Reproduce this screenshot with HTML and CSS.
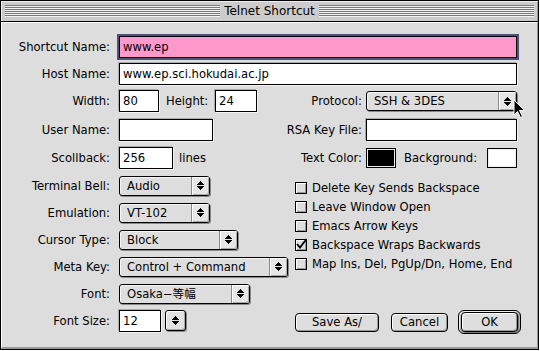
FILE: index.html
```html
<!DOCTYPE html>
<html>
<head>
<meta charset="utf-8">
<title>Telnet Shortcut</title>
<link rel="stylesheet" href="styles.css">
</head>
<body>
<div class="window">
  <div class="titlebar">
    <div class="stripes"></div>
    <div class="title">Telnet Shortcut</div>
    <div class="stripes"></div>
  </div>
  <div class="content">
    <div class="upper">
      <div class="lbl">Shortcut Name:</div>
      <div class="field focus wide">www.ep</div>

      <div class="lbl">Host Name:</div>
      <div class="field wide">www.ep.sci.hokudai.ac.jp</div>

      <div class="lbl">Width:</div>
      <div class="pair">
        <div class="field w40">80</div>
        <div class="inlbl">Height:</div>
        <div class="field w42">24</div>
      </div>
      <div class="rlbl">Protocol:</div>
      <div class="popup full">
        <span class="ptext">SSH &amp; 3DES</span>
        <span class="parrow"><svg width="7" height="9" viewBox="0 0 7 9"><path d="M3 0h1v1H3zM2 1h3v1H2zM1 2h5v1H1zM0 3h7v1H0zM0 5h7v1H0zM1 6h5v1H1zM2 7h3v1H2zM3 8h1v1H3z" fill="#000"/></svg></span>
      </div>

      <div class="lbl">User Name:</div>
      <div class="cell"><div class="field w94"></div></div>
      <div class="rlbl">RSA Key File:</div>
      <div class="field full"></div>

      <div class="lbl">Scollback:</div>
      <div class="pair">
        <div class="field w54">256</div>
        <div class="unit">lines</div>
      </div>
      <div class="rlbl">Text Color:</div>
      <div class="colors">
        <div class="swatch"><div class="fill black"></div></div>
        <div class="bglbl">Background:</div>
        <div class="swatch end"><div class="fill white"></div></div>
      </div>
    </div>

    <div class="lower">
      <div class="left">
        <div class="lbl">Terminal Bell:</div>
        <div class="popup w91">
          <span class="ptext">Audio</span>
          <span class="parrow"><svg width="7" height="9" viewBox="0 0 7 9"><path d="M3 0h1v1H3zM2 1h3v1H2zM1 2h5v1H1zM0 3h7v1H0zM0 5h7v1H0zM1 6h5v1H1zM2 7h3v1H2zM3 8h1v1H3z" fill="#000"/></svg></span>
        </div>

        <div class="lbl">Emulation:</div>
        <div class="popup w91">
          <span class="ptext">VT-102</span>
          <span class="parrow"><svg width="7" height="9" viewBox="0 0 7 9"><path d="M3 0h1v1H3zM2 1h3v1H2zM1 2h5v1H1zM0 3h7v1H0zM0 5h7v1H0zM1 6h5v1H1zM2 7h3v1H2zM3 8h1v1H3z" fill="#000"/></svg></span>
        </div>

        <div class="lbl">Cursor Type:</div>
        <div class="popup w119">
          <span class="ptext">Block</span>
          <span class="parrow"><svg width="7" height="9" viewBox="0 0 7 9"><path d="M3 0h1v1H3zM2 1h3v1H2zM1 2h5v1H1zM0 3h7v1H0zM0 5h7v1H0zM1 6h5v1H1zM2 7h3v1H2zM3 8h1v1H3z" fill="#000"/></svg></span>
        </div>

        <div class="lbl">Meta Key:</div>
        <div class="popup w169">
          <span class="ptext">Control + Command</span>
          <span class="parrow"><svg width="7" height="9" viewBox="0 0 7 9"><path d="M3 0h1v1H3zM2 1h3v1H2zM1 2h5v1H1zM0 3h7v1H0zM0 5h7v1H0zM1 6h5v1H1zM2 7h3v1H2zM3 8h1v1H3z" fill="#000"/></svg></span>
        </div>

        <div class="lbl">Font:</div>
        <div class="popup w131">
          <span class="ptext">Osaka−等幅</span>
          <span class="parrow"><svg width="7" height="9" viewBox="0 0 7 9"><path d="M3 0h1v1H3zM2 1h3v1H2zM1 2h5v1H1zM0 3h7v1H0zM0 5h7v1H0zM1 6h5v1H1zM2 7h3v1H2zM3 8h1v1H3z" fill="#000"/></svg></span>
        </div>

        <div class="lbl">Font Size:</div>
        <div class="pair">
          <div class="field w42">12</div>
          <div class="stepper"><svg width="7" height="9" viewBox="0 0 7 9"><path d="M3 0h1v1H3zM2 1h3v1H2zM1 2h5v1H1zM0 3h7v1H0zM0 5h7v1H0zM1 6h5v1H1zM2 7h3v1H2zM3 8h1v1H3z" fill="#000"/></svg></div>
        </div>
      </div>

      <div class="right">
        <div class="checks">
          <div class="check"><span class="cb"></span>Delete Key Sends Backspace</div>
          <div class="check"><span class="cb"></span>Leave Window Open</div>
          <div class="check"><span class="cb"></span>Emacs Arrow Keys</div>
          <div class="check"><span class="cb on"><svg width="13" height="13" viewBox="0 0 13 13"><path d="M2 6 L5 9.5 L11.5 1" fill="none" stroke="#000" stroke-width="1.8"/></svg></span>Backspace Wraps Backwards</div>
          <div class="check"><span class="cb"></span>Map Ins, Del, PgUp/Dn, Home, End</div>
        </div>
        <div class="buttons">
          <div class="btn save">Save As/</div>
          <div class="btn cancel">Cancel</div>
          <div class="okring"><div class="btn ok">OK</div></div>
        </div>
      </div>
    </div>
  </div>
  <svg class="pointer" width="13" height="20" viewBox="0 0 13 20"><path d="M1 1 L1 16 L4.5 12.5 L7.5 18.5 L9.5 17.5 L6.5 11.5 L11.5 11.5 Z" fill="#000" stroke="#fff" stroke-width="1"/></svg>
</div>
</body>
</html>
```

FILE: styles.css
```css
html, body {
  margin: 0;
  padding: 0;
  background: #fff;
}

body {
  font-family: "DejaVu Sans", "Noto Sans CJK JP", sans-serif;
  font-size: 11.6px;
  color: #000;
}

.window {
  position: relative;
  width: 539px;
  height: 350px;
  box-sizing: border-box;
  border: 1px solid #000;
  background: #cccccc;
  display: flex;
  flex-direction: column;
  overflow: hidden;
}

.titlebar {
  height: 20px;
  flex: none;
  border-bottom: 1px solid #000;
  background: #cccccc;
  box-shadow: inset 1px 1px 0 #eeeeee, inset -1px 0 0 #999;
  display: flex;
  align-items: center;
  padding: 0 4px 0 4px;
}

.stripes {
  flex: 1;
  height: 12px;
  background: repeating-linear-gradient(to bottom, #777 0 1px, #f4f4f4 1px 2px);
}

.title {
  padding: 0 4px;
  line-height: 18px;
  font-size: 12px;
}

.content {
  flex: 1;
  background: #dddddd;
  border-top: 1px solid #fff;
  border-left: 1px solid #fff;
  border-right: 1px solid #999;
  border-bottom: 2px solid #999;
  padding: 11px 0 0 8px;
}

.upper {
  display: grid;
  grid-template-columns: 108px 152px 96px 151px;
  grid-template-rows: 26px 27px 28px 29px 27px;
  align-items: center;
}

.lbl {
  text-align: right;
  padding-right: 8px;
  white-space: nowrap;
}

.rlbl {
  text-align: right;
  padding-right: 4px;
  white-space: nowrap;
}

.field {
  box-sizing: border-box;
  height: 22px;
  border: 1px solid #000;
  background: #fff;
  padding: 0 3px;
  line-height: 20px;
  margin-left: 1px;
  white-space: nowrap;
  overflow: hidden;
  box-shadow: -1px -1px 0 #aaa, 1px 1px 0 #f4f4f4;
}

.field.wide {
  grid-column: 2 / 5;
}

.field.focus {
  height: 22px;
  background: #ff99cc;
  box-shadow: 0 0 0 2px #50507a;
}

.field.full {
  margin-left: 0;
}

.w40 { width: 40px; }
.w42 { width: 42px; }
.w54 { width: 54px; }
.w94 { width: 94px; }

.pair {
  display: flex;
  align-items: center;
}

.inlbl {
  width: 41px;
  margin: 0 7px 0 7px;
  white-space: nowrap;
}

.unit {
  margin-left: 6px;
}

.cell {
  display: flex;
}

.popup {
  box-sizing: border-box;
  height: 20px;
  display: flex;
  border: 1px solid #000;
  border-radius: 3px;
  background: #dedede;
  box-shadow: 1px 1px 0 #8a8a8a, inset 1px 1px 0 #f6f6f6;
  margin-left: 1px;
}

.popup.full {
  margin-left: 0;
}

.w91 { width: 91px; }
.w119 { width: 119px; }
.w131 { width: 131px; }
.w169 { width: 169px; }

.ptext {
  flex: 1;
  padding-left: 7px;
  line-height: 18px;
  white-space: nowrap;
}

.parrow {
  width: 17px;
  flex: none;
  border-left: 1px solid #8a8a8a;
  border-radius: 0 2px 2px 0;
  background: #e6e6e6;
  box-shadow: inset 1px 1px 0 #fff, inset -1px -1px 0 #aaa;
  display: flex;
  align-items: center;
  justify-content: center;
}

.colors {
  display: flex;
  align-items: center;
}

.swatch {
  box-sizing: border-box;
  width: 30px;
  height: 20px;
  border: 1px solid #000;
  padding: 1px;
  background: #eeeeee;
}

.swatch.end {
  margin-left: auto;
}

.fill {
  height: 100%;
}

.fill.black {
  background: #000;
}

.fill.white {
  background: #fff;
}

.bglbl {
  margin-left: 8px;
}

.lower {
  display: flex;
  margin-top: 1px;
}

.left {
  width: 285px;
  display: grid;
  grid-template-columns: 108px 1fr;
  grid-auto-rows: 27px;
  align-items: center;
}

.stepper {
  box-sizing: border-box;
  width: 21px;
  height: 21px;
  margin-left: 4px;
  border: 1px solid #000;
  border-radius: 3px;
  background: #e2e2e2;
  box-shadow: 1px 1px 0 #8a8a8a, inset 1px 1px 0 #fff, inset -1px -1px 0 #aaa;
  display: flex;
  align-items: center;
  justify-content: center;
}

.right {
  padding-top: 6px;
}

.checks {
  display: flex;
  flex-direction: column;
}

.check {
  height: 19px;
  display: flex;
  align-items: center;
  white-space: nowrap;
}

.cb {
  position: relative;
  box-sizing: border-box;
  width: 12px;
  height: 12px;
  flex: none;
  margin-right: 5px;
  border: 1px solid #000;
  background: #dedede;
  box-shadow: inset 1px 1px 0 #fff, inset -1px -1px 0 #999;
}

.cb.on svg {
  position: absolute;
  left: -1px;
  top: -2px;
}

.buttons {
  margin-top: 37px;
  display: flex;
  align-items: center;
  height: 24px;
}

.btn {
  box-sizing: border-box;
  height: 19px;
  border: 1px solid #000;
  border-radius: 4px;
  background: #dedede;
  box-shadow: inset 1px 1px 0 #fff, inset -1px -1px 0 #999;
  text-align: center;
  line-height: 17px;
}

.save {
  width: 84px;
}

.cancel {
  width: 57px;
  margin-left: 12px;
}

.okring {
  box-sizing: border-box;
  width: 63px;
  height: 24px;
  margin-left: 10px;
  border: 1px solid #000;
  border-radius: 6px;
  background: #b4b4b4;
  box-shadow: inset 1px 1px 0 #eee;
  padding: 1px 2px;
}

.ok {
  height: 20px;
  line-height: 18px;
  box-shadow: inset 1px 1px 0 #fff, inset -1px -1px 0 #999, 1px 1px 0 #777;
}

.pointer {
  position: absolute;
  left: 512px;
  top: 98px;
}
```
